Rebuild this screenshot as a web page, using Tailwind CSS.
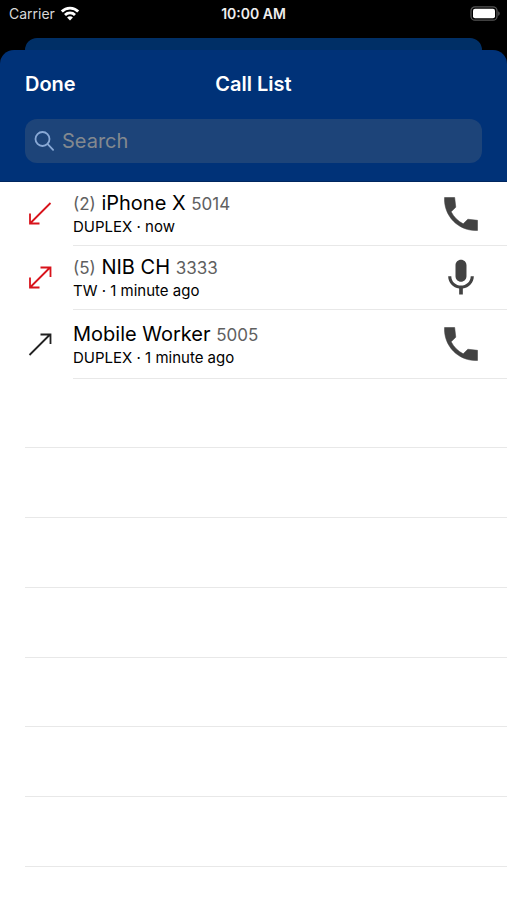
<!DOCTYPE html>
<html lang="en">
<head>
<meta charset="utf-8">
<meta name="viewport" content="width=device-width, initial-scale=1">
<title>Call List</title>
<script src="https://cdn.jsdelivr.net/npm/@tailwindcss/browser@4"></script>
</head>
<body class="flex min-h-screen flex-col bg-black font-['Inter','Liberation_Sans',sans-serif] text-black">
  <div class="grid h-[38px] shrink-0 grid-cols-3 items-start px-2 pt-1 text-sm leading-5">
    <div class="flex items-center gap-1 pl-px text-[#d8d8d8]">
      <span>Carrier</span>
      <svg class="ml-px h-4 w-5" viewBox="0 0 20 16" fill="none" stroke="#fff" stroke-width="2.8" aria-label="Wi-Fi">
        <path d="M1.800 5.600a11.600 11.600 0 0 1 16.400 0"/>
        <path d="M5 9a7.100 7.100 0 0 1 10 0"/>
        <path d="M10 14.600 7.100 11.600a4 4 0 0 1 5.800 0z" fill="#fff" stroke="none"/>
      </svg>
    </div>
    <span class="text-center font-semibold whitespace-nowrap text-[#eee]">10:00 AM</span>
    <svg class="mt-[2px] -mr-px h-[15px] w-[31px] justify-self-end" viewBox="0 0 31 15" aria-label="Battery full">
      <rect x="2" y=".8" width="26" height="13.4" rx="4" fill="none" stroke="#555" stroke-width="1.3"/>
      <rect x="4" y="2.800" width="22" height="9.400" rx="2" fill="#fff"/>
      <path d="M29.200 5.200c2 .8 2 3.800 0 4.600z" fill="#555"/>
    </svg>
  </div>
  <div class="mx-[25px] h-3 shrink-0 rounded-t-[12px] bg-[#002f66]"></div>
  <main class="flex grow flex-col">
    <header class="rounded-t-[14px] border-b border-[#00265f] bg-[#003278] px-[25px] pt-5 pb-[18px] text-white">
      <div class="grid grid-cols-3 items-center text-xl leading-7 font-semibold">
        <button type="button" class="justify-self-start">Done</button>
        <h1 class="text-center whitespace-nowrap">Call List</h1>
      </div>
      <label class="mt-[21px] flex h-11 items-center gap-2 rounded-[12px] bg-[#1d4479] pr-3 pl-[9px]">
        <svg class="size-5 shrink-0" viewBox="0 0 20 20" fill="none" stroke="#89a9d6" stroke-width="1.800" stroke-linecap="round" aria-hidden="true">
          <circle cx="8.500" cy="8" r="7"/><path d="m13.700 13.200 5.400 5.600"/>
        </svg>
        <input type="search" placeholder="Search" aria-label="Search" class="min-w-0 grow bg-transparent text-xl leading-7 outline-none placeholder:text-[#83898f]">
      </label>
    </header>
    <ul class="grow bg-white">
      <li class="flex h-16 items-stretch pl-7">
        <svg class="mr-[21px] size-6 shrink-0 self-center" viewBox="0 0 24 24" fill="none" stroke="#d8131b" stroke-width="1.800" aria-label="Incoming"><path d="M22.500 1 2 21.500M2 11.500V21.500h9.500"/></svg>
        <div class="flex grow items-center justify-between border-b border-[#e8e8e8] pr-6">
          <div class="pt-0.5">
            <p class="text-xl leading-6"><span class="text-[17px] text-[#606060]">(2)</span> iPhone X <span class="text-[17px] text-[#606060]">5014</span></p>
            <p class="text-[15px] leading-[22px]">DUPLEX · now</p>
          </div>
          <button type="button" aria-label="Call iPhone X"><svg class="size-11" viewBox="0 0 24 24" fill="#424242" stroke="#424242" stroke-width=".3" stroke-linejoin="round"><path d="M21 15.460l-5.270-.61-2.520 2.520c-2.830-1.440-5.150-3.750-6.590-6.590l2.530-2.530L8.540 3H3.030C2.450 13.180 10.820 21.550 21 20.970v-5.510z"/></svg></button>
        </div>
      </li>
      <li class="flex h-16 items-stretch pl-7">
        <svg class="mr-[21px] size-6 shrink-0 self-center" viewBox="0 0 24 24" fill="none" stroke="#d8131b" stroke-width="1.800" aria-label="Incoming and outgoing"><path d="M22 1.500 2 21.500M2 11.500V21.500h9.500M12.500 1.500H22.500V11"/></svg>
        <div class="flex grow items-center justify-between border-b border-[#e8e8e8] pr-6">
          <div class="pt-0.5">
            <p class="text-xl leading-6"><span class="text-[17px] text-[#606060]">(5)</span> NIB CH <span class="text-[17px] text-[#606060]">3333</span></p>
            <p class="text-[15px] leading-[22px]">TW · 1 minute ago</p>
          </div>
          <button type="button" aria-label="Talk to NIB CH"><svg class="size-11" viewBox="0 0 24 24" fill="#424242"><path d="M12 14c1.660 0 2.990-1.340 2.990-3L15 5c0-1.660-1.340-3-3-3S9 3.340 9 5v6c0 1.660 1.340 3 3 3zm5.300-3c0 3-2.540 5.100-5.300 5.100S6.700 14 6.700 11H5c0 3.410 2.720 6.230 6 6.720V21h2v-3.280c3.280-.48 6-3.300 6-6.720h-1.700z"/></svg></button>
        </div>
      </li>
      <li class="flex h-[69px] items-stretch pl-7">
        <svg class="mr-[21px] size-6 shrink-0 self-center" viewBox="0 0 24 24" fill="none" stroke="#222" stroke-width="1.800" aria-label="Outgoing"><path d="M22 1.500 1.500 22M12.500 1.500H22.500V11"/></svg>
        <div class="flex grow items-center justify-between border-b border-[#e8e8e8] pr-6">
          <div class="pt-0.5">
            <p class="text-xl leading-6">Mobile Worker <span class="text-[17px] text-[#606060]">5005</span></p>
            <p class="text-[15px] leading-[22px]">DUPLEX · 1 minute ago</p>
          </div>
          <button type="button" aria-label="Call Mobile Worker"><svg class="size-11" viewBox="0 0 24 24" fill="#424242" stroke="#424242" stroke-width=".3" stroke-linejoin="round"><path d="M21 15.460l-5.270-.61-2.520 2.520c-2.830-1.440-5.150-3.750-6.590-6.590l2.530-2.530L8.540 3H3.030C2.450 13.180 10.820 21.550 21 20.970v-5.510z"/></svg></button>
        </div>
      </li>
      <li class="ml-[25px] h-[69px] border-b border-[#e8e8e8]" aria-hidden="true"></li>
      <li class="ml-[25px] h-[70px] border-b border-[#e8e8e8]" aria-hidden="true"></li>
      <li class="ml-[25px] h-[70px] border-b border-[#e8e8e8]" aria-hidden="true"></li>
      <li class="ml-[25px] h-[70px] border-b border-[#e8e8e8]" aria-hidden="true"></li>
      <li class="ml-[25px] h-[69px] border-b border-[#e8e8e8]" aria-hidden="true"></li>
      <li class="ml-[25px] h-[70px] border-b border-[#e8e8e8]" aria-hidden="true"></li>
      <li class="ml-[25px] h-[70px] border-b border-[#e8e8e8]" aria-hidden="true"></li>
    </ul>
  </main>
</body>
</html>
